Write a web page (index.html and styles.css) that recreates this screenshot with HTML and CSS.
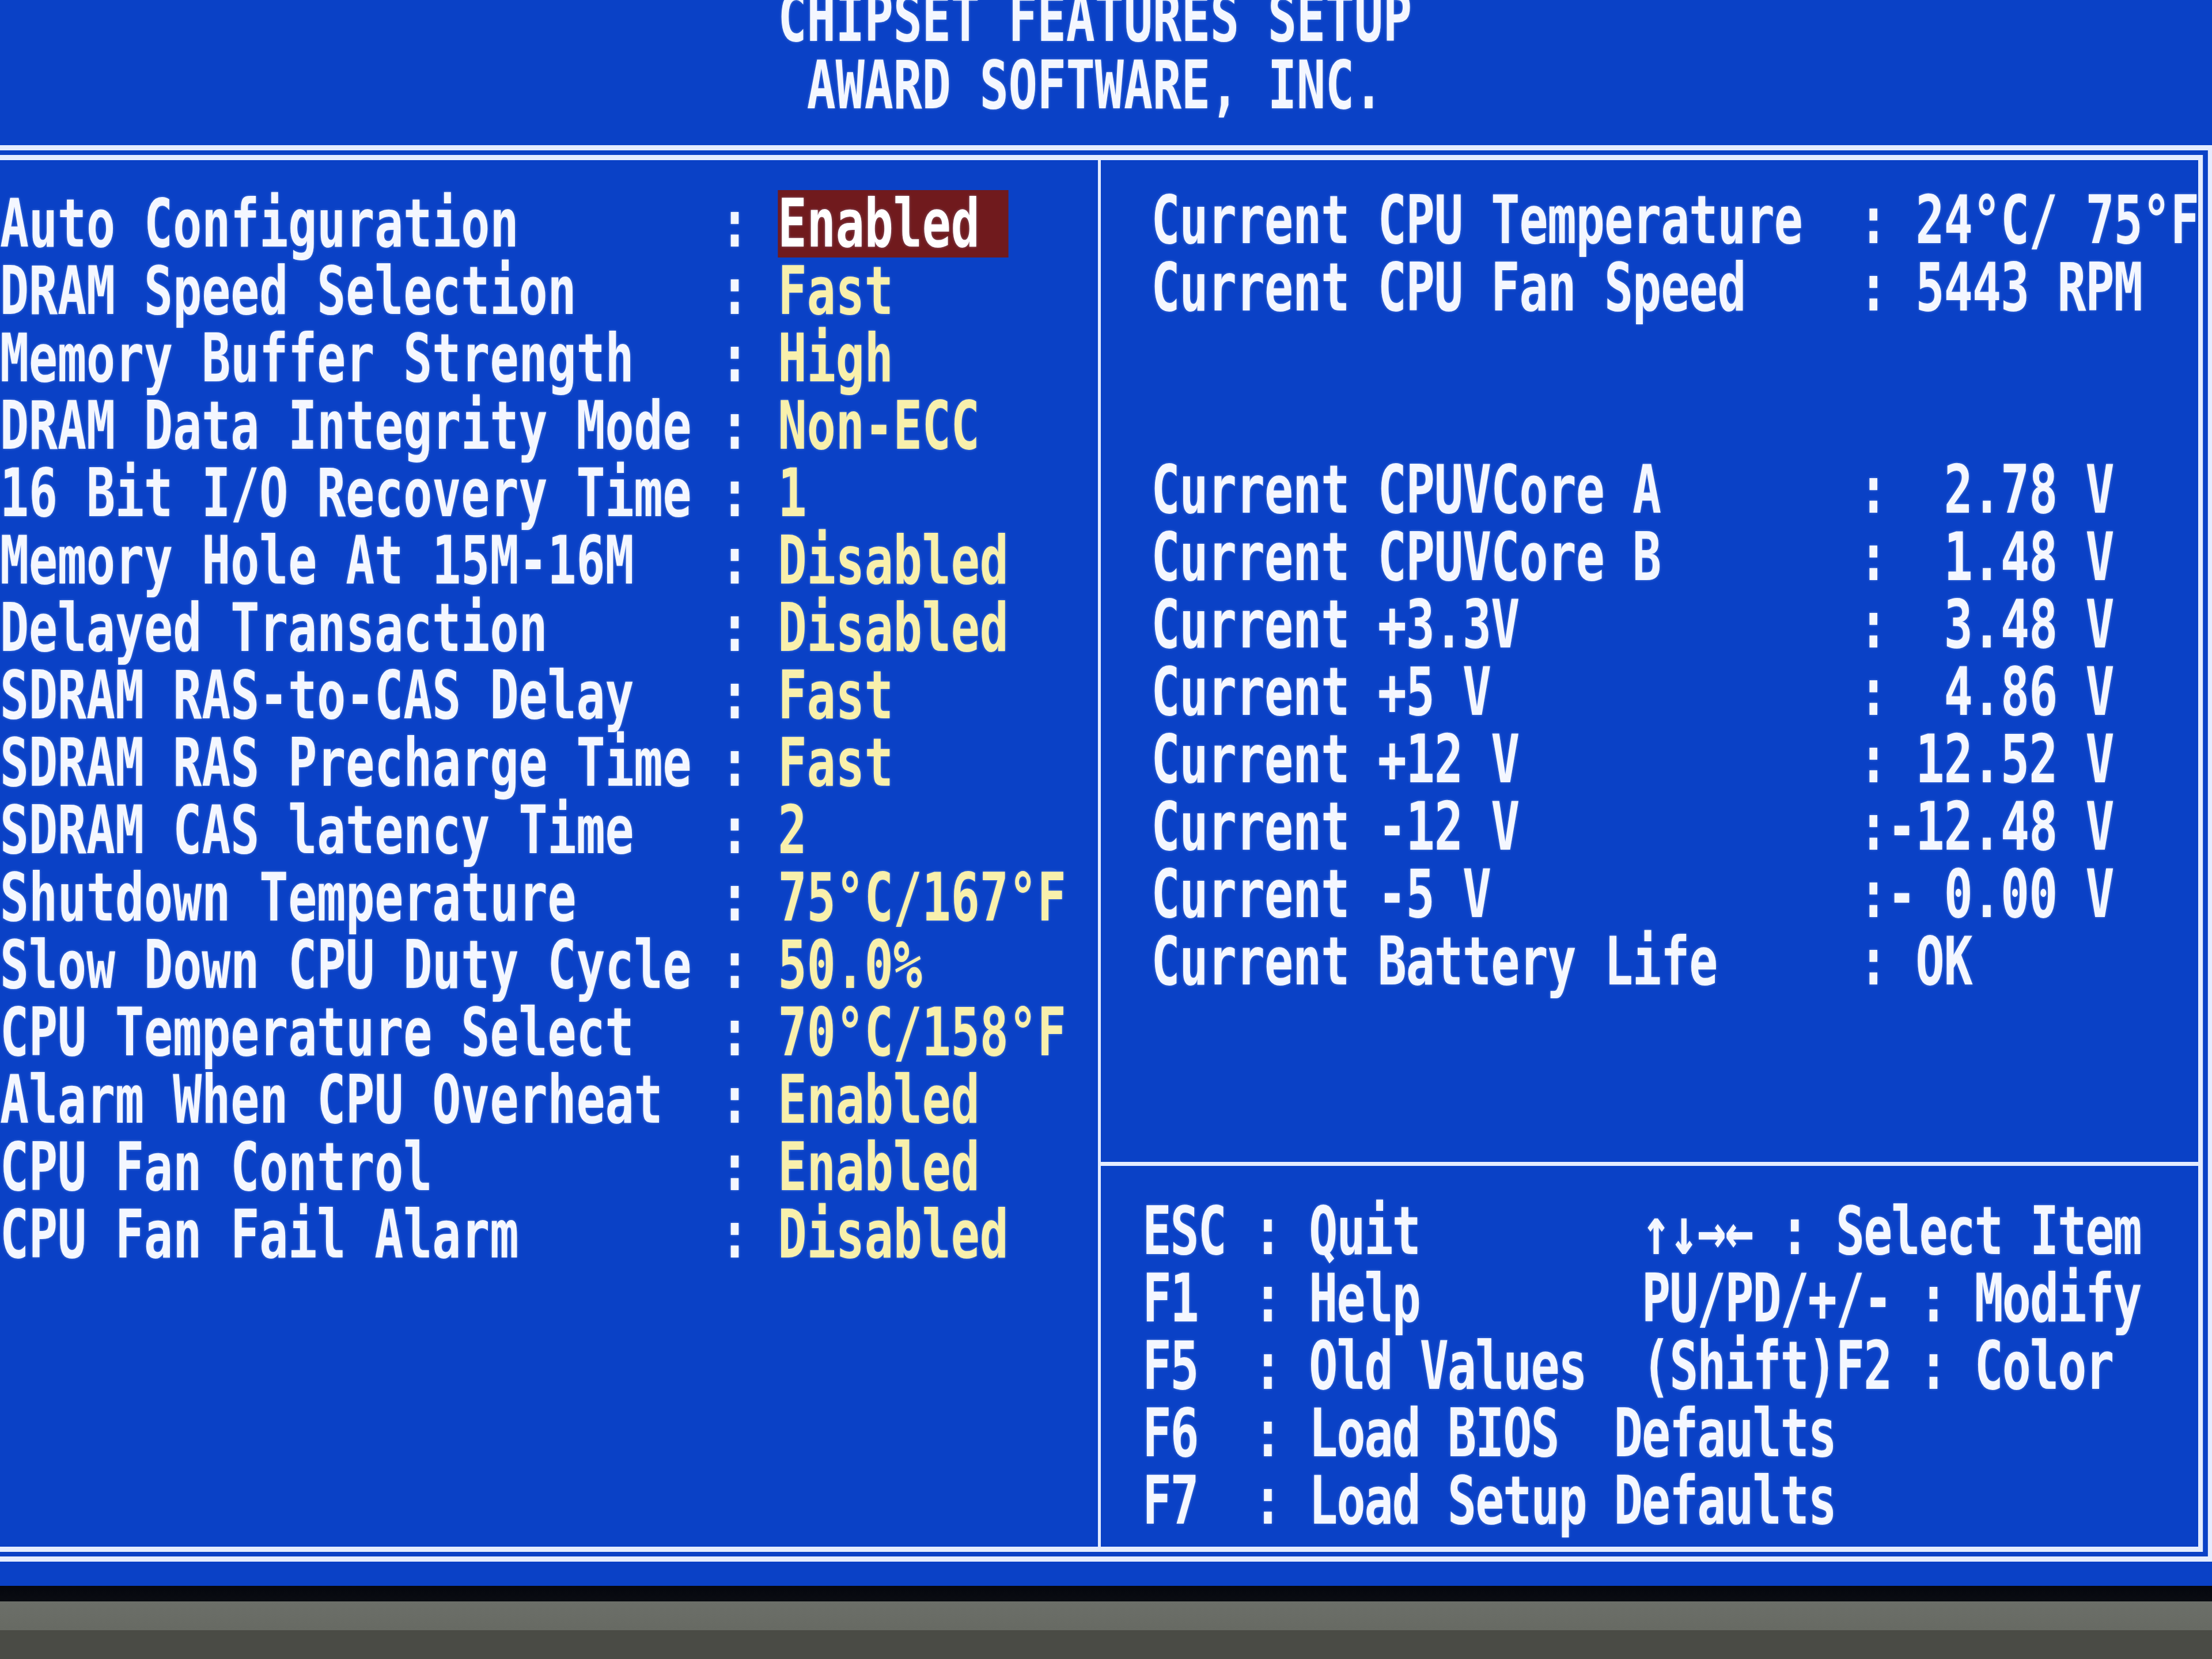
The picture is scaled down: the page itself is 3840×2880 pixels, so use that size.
FILE: index.html
```html
<!DOCTYPE html>
<html lang="en">
<head>
    <meta charset="UTF-8">
    <meta name="viewport" content="width=device-width, initial-scale=1.0">
    <title>Chipset Features Setup - Award BIOS</title>
    <link rel="stylesheet" href="styles.css">
</head>
<body>
    <div class="screen">
        <div class="title">
            <div class="line">CHIPSET FEATURES SETUP</div>
            <div class="line">AWARD SOFTWARE, INC.</div>
        </div>

        <div class="frame">
            <!-- left: chipset options -->
            <div class="options">
                <div class="opt"><span>Auto Configuration</span><span>:</span><span class="value sel">Enabled </span></div>
                <div class="opt"><span>DRAM Speed Selection</span><span>:</span><span class="value">Fast</span></div>
                <div class="opt"><span>Memory Buffer Strength</span><span>:</span><span class="value">High</span></div>
                <div class="opt"><span>DRAM Data Integrity Mode</span><span>:</span><span class="value">Non-ECC</span></div>
                <div class="opt"><span>16 Bit I/O Recovery Time</span><span>:</span><span class="value">1</span></div>
                <div class="opt"><span>Memory Hole At 15M-16M</span><span>:</span><span class="value">Disabled</span></div>
                <div class="opt"><span>Delayed Transaction</span><span>:</span><span class="value">Disabled</span></div>
                <div class="opt"><span>SDRAM RAS-to-CAS Delay</span><span>:</span><span class="value">Fast</span></div>
                <div class="opt"><span>SDRAM RAS Precharge Time</span><span>:</span><span class="value">Fast</span></div>
                <div class="opt"><span>SDRAM CAS latency Time</span><span>:</span><span class="value">2</span></div>
                <div class="opt"><span>Shutdown Temperature</span><span>:</span><span class="value">75°C/167°F</span></div>
                <div class="opt"><span>Slow Down CPU Duty Cycle</span><span>:</span><span class="value">50.0%</span></div>
                <div class="opt"><span>CPU Temperature Select</span><span>:</span><span class="value">70°C/158°F</span></div>
                <div class="opt"><span>Alarm When CPU Overheat</span><span>:</span><span class="value">Enabled</span></div>
                <div class="opt"><span>CPU Fan Control</span><span>:</span><span class="value">Enabled</span></div>
                <div class="opt"><span>CPU Fan Fail Alarm</span><span>:</span><span class="value">Disabled</span></div>
            </div>

            <!-- right: hardware monitor + key help -->
            <div class="side">
                <div class="status">
                    <div class="stat"><span>Current CPU Temperature</span><span>:</span><span> 24°C/ 75°F</span></div>
                    <div class="stat"><span>Current CPU Fan Speed</span><span>:</span><span> 5443 RPM</span></div>
                    <div class="volts">
                        <div class="stat"><span>Current CPUVCore A</span><span>:</span><span>  2.78 V</span></div>
                        <div class="stat"><span>Current CPUVCore B</span><span>:</span><span>  1.48 V</span></div>
                        <div class="stat"><span>Current +3.3V</span><span>:</span><span>  3.48 V</span></div>
                        <div class="stat"><span>Current +5 V</span><span>:</span><span>  4.86 V</span></div>
                        <div class="stat"><span>Current +12 V</span><span>:</span><span> 12.52 V</span></div>
                        <div class="stat"><span>Current -12 V</span><span>:</span><span>-12.48 V</span></div>
                        <div class="stat"><span>Current -5 V</span><span>:</span><span>- 0.00 V</span></div>
                        <div class="stat"><span>Current Battery Life</span><span>:</span><span> OK</span></div>
                    </div>
                </div>
                <div class="help">
                    <div class="line">ESC : Quit        ↑↓→← : Select Item</div>
                    <div class="line">F1  : Help        PU/PD/+/- : Modify</div>
                    <div class="line">F5  : Old Values  (Shift)F2 : Color</div>
                    <div class="line">F6  : Load BIOS  Defaults</div>
                    <div class="line">F7  : Load Setup Defaults</div>
                </div>
            </div>
        </div>
    </div>
    <div class="bezel"></div>
</body>
</html>
```

FILE: styles.css
```css
html, body {
    margin: 0;
    padding: 0;
    overflow: hidden;
    background: #45463f;
}
/* text mode screen: glyphs are drawn wide, then squeezed to tall 50px cells */
.screen {
    font-family: "DejaVu Sans Mono", "Liberation Mono", monospace;
    font-weight: bold;
    font-size: 115px;
    line-height: 117px;
    color: #f4f7ff;
    text-shadow: 0 0 5px rgba(190, 215, 255, 0.45);
    background: #0a41c6;
    width: 76.8ch;
    padding-bottom: 42.5px;
    transform: scaleX(0.7225);
    transform-origin: 0 0;
}
.title {
    width: 76ch;
    margin-top: -27.5px;
    text-align: center;
}
.line {
    height: 117px;
    white-space: pre;
}
.frame {
    display: grid;
    grid-template-columns: 38.1ch 1fr;
    margin-top: 45.5px;
    border-top: 26px double #e4ecff;
    border-bottom: 26px double #e4ecff;
    border-right: 36px double #e4ecff;
}
.options {
    padding-top: 52px;
}
.opt {
    display: grid;
    grid-template-columns: 25ch 2ch auto;
    height: 117px;
}
.opt span, .stat span {
    white-space: pre;
}
.value {
    color: #f8f0ac;
}
.value.sel {
    width: 8ch;
    background: #701a1d;
    color: #ffffff;
}
.side {
    border-left: 7px solid #e4ecff;
    letter-spacing: -1.2px;
}
.status {
    padding: 45.5px 0 289.5px calc(1.85ch - 7px);
}
.stat {
    display: grid;
    grid-template-columns: calc(25ch - 30px) calc(1ch - 1.2px) auto;
    height: 117px;
}
.volts {
    margin-top: 234px;
}
.help {
    border-top: 7px solid #e4ecff;
    padding: 54.5px 0 21px calc(1.55ch - 7px);
    letter-spacing: -2.6px;
}
.bezel {
    height: 200px;
    background: linear-gradient(#05070e 0, #0a0c12 27px, #6c6f69 27px, #676a63 77px, #4a4b45 77px);
}
```
